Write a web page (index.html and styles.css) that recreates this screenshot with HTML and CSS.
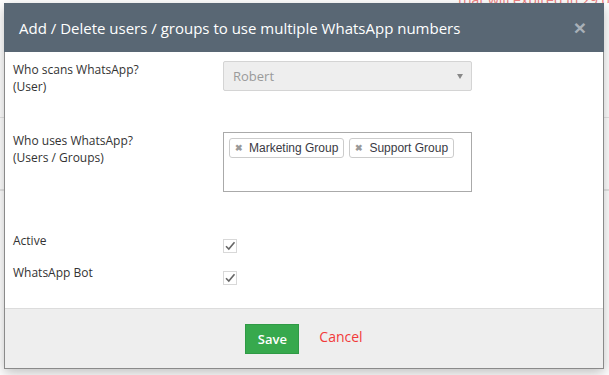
FILE: index.html
```html
<!DOCTYPE html>
<html lang="en">
<head>
  <meta charset="UTF-8" />
  <meta name="viewport" content="width=device-width, initial-scale=1.0"/>
  <title>WhatsApp numbers</title>
  <link rel="stylesheet" href="styles.css">
</head>
<body>
  <!-- page behind the dialog -->
  <div class="page">
    <div class="page-top">
      <span class="page-icon"></span>
      <span class="page-icon"></span>
      <span class="page-warn">that will expired in 29 days</span>
    </div>
    <div class="page-rule rule-a"></div>
    <div class="page-rule rule-b"></div>
    <div class="page-rule rule-c"></div>
  </div>

  <!-- dialog -->
  <div class="modal">
    <div class="modal-header">
      <h4>Add / Delete users / groups to use multiple WhatsApp numbers</h4>
      <span class="close">&times;</span>
    </div>

    <div class="modal-body">
      <div class="row">
        <label>Who scans WhatsApp?<br />(User)</label>
        <div class="select">
          <span>Robert</span>
          <span class="caret"></span>
        </div>
      </div>

      <div class="row row-tags">
        <label>Who uses WhatsApp?<br />(Users / Groups)</label>
        <div class="tags">
          <span class="tag"><b>&#x2716;</b>Marketing Group</span>
          <span class="tag"><b>&#x2716;</b>Support Group</span>
        </div>
      </div>

      <div class="row row-check row-active">
        <label>Active</label>
        <span class="check">
          <svg width="14" height="14" viewBox="0 0 14 14"><path d="M3 7.2 L5.8 10 L11.5 3.2" fill="none" stroke="#666" stroke-width="1.6"/></svg>
        </span>
      </div>

      <div class="row row-check">
        <label>WhatsApp Bot</label>
        <span class="check">
          <svg width="14" height="14" viewBox="0 0 14 14"><path d="M3 7.2 L5.8 10 L11.5 3.2" fill="none" stroke="#666" stroke-width="1.6"/></svg>
        </span>
      </div>
    </div>

    <div class="modal-footer">
      <button class="btn-save">Save</button>
      <a class="btn-cancel" href="#">Cancel</a>
    </div>
  </div>
</body>
</html>
```

FILE: styles.css
```css
body {
  margin: 0;
  background: #fff;
  font-family: 'Open Sans', 'Liberation Sans', sans-serif;
  color: #333;
  width: 609px;
  height: 375px;
  overflow: hidden;
  position: relative;
}
.page-top {
  height: 3px;
  overflow: hidden;
  display: flex;
  padding-left: 366px;
  gap: 28px;
}
.page-icon {
  width: 18px;
  height: 12px;
  background: #b8dcb8;
  border-radius: 3px;
}
.page-warn {
  margin-left: 36px;
  margin-top: -10px;
  color: #f08080;
  font-size: 14px;
  white-space: nowrap;
}
.page-rule {
  height: 1px;
  background: #e6e6e6;
  margin-top: 114px;
}
.rule-b { margin-top: 71px; }
.rule-c { margin-top: 0; }

/* dialog */
.modal {
  position: absolute;
  left: 4px;
  top: 3px;
  width: 600px;
  box-sizing: border-box;
  border: 1px solid #8a8a8a;
  border-top: none;
  background: #fff;
  box-shadow: 0 4px 12px rgba(0, 0, 0, 0.25);
}
.modal-header {
  background: #596774;
  height: 49px;
  display: flex;
  align-items: center;
  justify-content: space-between;
  padding: 0 18px 0 15px;
  margin: 0 -1px;
}
.modal-header h4 {
  margin: 0;
  color: #fff;
  font-size: 15px;
  font-weight: 400;
  letter-spacing: 0;
}
.close {
  color: #a8b0b8;
  font-family: 'Liberation Sans', sans-serif;
  font-weight: bold;
  font-size: 21px;
  line-height: 1;
}
.modal-body {
  padding: 9px 8px 12px;
}
.row {
  display: grid;
  grid-template-columns: 210px 249px;
  align-items: start;
}
.row label {
  font-size: 12px;
  line-height: 17px;
  color: #333;
}
.row-tags {
  margin-top: 37px;
}
.row-active {
  margin-top: 40px;
}
.row-check {
  height: 32px;
}
.select {
  height: 30px;
  box-sizing: border-box;
  border: 1px solid #d4d4d4;
  border-radius: 2px;
  background: #eee;
  display: flex;
  align-items: center;
  justify-content: space-between;
  padding: 0 8px 0 9px;
  font-size: 13px;
  color: #9a9a9a;
}
.caret {
  width: 0;
  height: 0;
  border-left: 3.5px solid transparent;
  border-right: 3.5px solid transparent;
  border-top: 5px solid #888;
}
.tags {
  height: 60px;
  box-sizing: border-box;
  border: 1px solid #aaa;
  padding: 5px 5px;
  display: flex;
  align-items: flex-start;
  gap: 5px;
}
.tag {
  display: inline-flex;
  align-items: center;
  height: 20px;
  box-sizing: border-box;
  border: 1px solid #ccc;
  border-radius: 3px;
  padding: 0 5px 0 5px;
  font-family: 'Liberation Sans', sans-serif;
  font-size: 12px;
  color: #3a3a44;
}
.tag b {
  color: #999;
  font-size: 9px;
  margin-right: 6px;
}
.check {
  margin-top: 7px;
  width: 14px;
  height: 14px;
  box-sizing: border-box;
  border: 1px solid #d8d8d8;
  display: flex;
  align-items: center;
  justify-content: center;
}
.check svg {
  flex: none;
}
.modal-footer {
  background: #eee;
  border-top: 1px solid #dcdcdc;
  height: 60px;
  box-sizing: border-box;
  display: flex;
  align-items: flex-start;
  justify-content: center;
  gap: 20px;
  padding-top: 15px;
}
.btn-save {
  width: 54px;
  height: 30px;
  border: 1px solid #2f9a45;
  background: #37a94d;
  color: #fff;
  font-family: 'Open Sans', sans-serif;
  font-size: 13px;
  font-weight: 600;
  padding: 0;
}
.btn-cancel {
  color: #f23a3a;
  font-size: 14px;
  text-decoration: none;
  line-height: 26px;
}
```
